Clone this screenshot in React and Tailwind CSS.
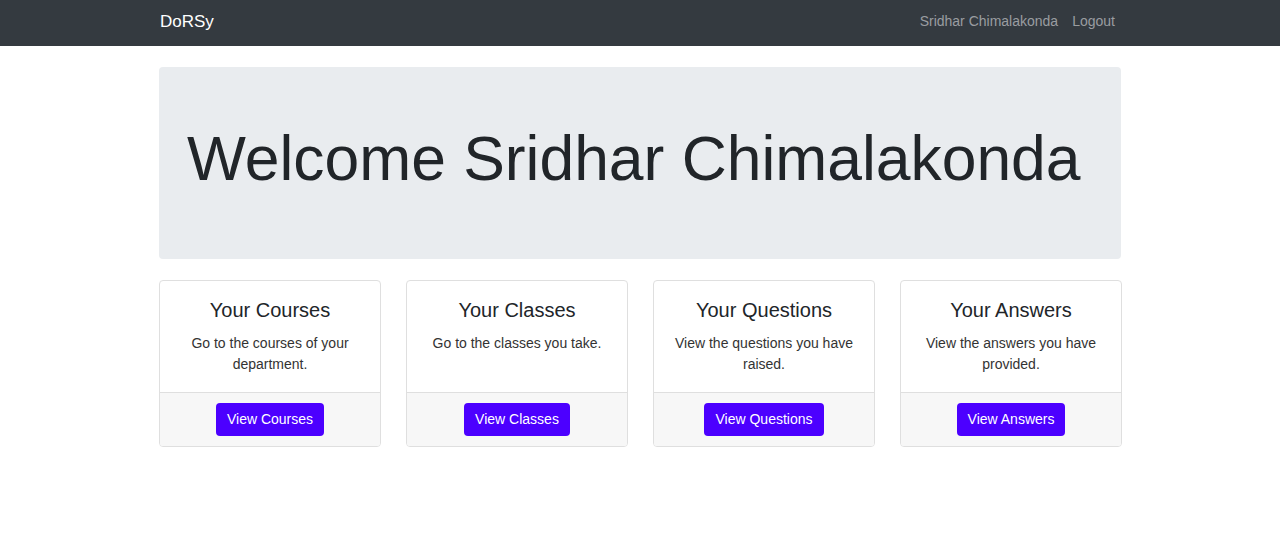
export default function App() {
  const cards = [
    { title: "Your Courses", text: "Go to the courses of your department.", btn: "View Courses" },
    { title: "Your Classes", text: "Go to the classes you take.", btn: "View Classes" },
    { title: "Your Questions", text: "View the questions you have raised.", btn: "View Questions" },
    { title: "Your Answers", text: "View the answers you have provided.", btn: "View Answers" },
  ];
  return (
    <div className="min-h-[550px] bg-white text-[#212529]" style={{ fontFamily: '"Liberation Sans", Arial, sans-serif' }}>
      <nav className="h-[46px] bg-[#343a40]">
        <div className="mx-auto flex h-full w-[962px] items-center justify-between pb-[3px] pl-[1px]">
          <span className="text-[17px] text-white">DoRSy</span>
          <div className="flex gap-[14px] pr-[6px] text-[14px] text-[#9a9da0]">
            <span>Sridhar Chimalakonda</span>
            <span>Logout</span>
          </div>
        </div>
      </nav>
      <div className="mx-auto w-[962px] pt-[21px]">
        <div className="flex h-[192px] items-center rounded-[4px] bg-[#e9ecef] pb-[7px] pl-[28px]">
          <h1 className="text-[62.4px] leading-[1.2]">Welcome Sridhar Chimalakonda</h1>
        </div>
        <div className="mt-[21px] mr-[-1px] grid grid-cols-4 gap-[25px]">
          {cards.map((c) => (
            <div key={c.title} className="flex flex-col overflow-hidden rounded-[4px] border border-[#dfdfdf] text-center">
              <div className="flex-1 px-[20px] pt-[17px] pb-[17px]">
                <h5 className="text-[20px] leading-[24px]">{c.title}</h5>
                <p className="mt-[11px] text-[14px] leading-[21px] text-[#333]">{c.text}</p>
              </div>
              <div className="flex justify-center border-t border-[#dfdfdf] bg-[#f7f7f7] py-[10px]">
                <button className="h-[33px] rounded-[4px] bg-[#4c00ff] px-[11px] text-[14px] leading-[21px] text-white">
                  {c.btn}
                </button>
              </div>
            </div>
          ))}
        </div>
      </div>
    </div>
  );
}
